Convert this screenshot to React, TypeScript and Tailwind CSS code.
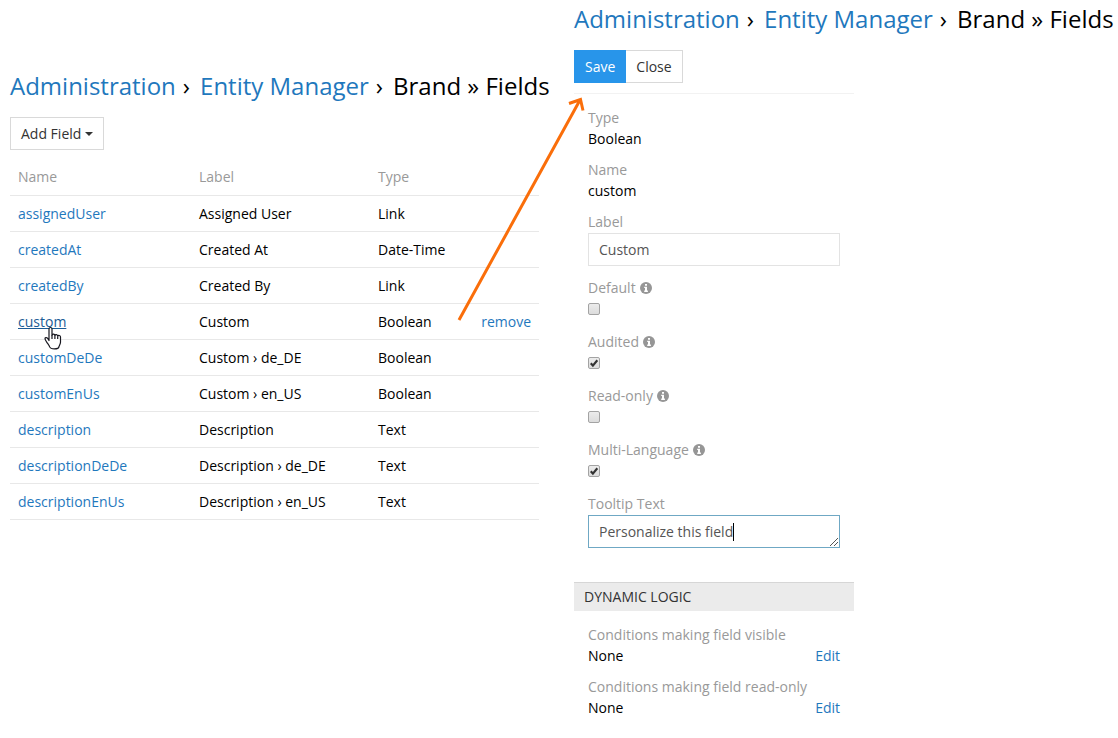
import { useState } from "react";

const fields = [
  { name: "assignedUser", label: "Assigned User", type: "Link" },
  { name: "createdAt", label: "Created At", type: "Date-Time" },
  { name: "createdBy", label: "Created By", type: "Link" },
  { name: "custom", label: "Custom", type: "Boolean", hovered: true },
  { name: "customDeDe", label: "Custom › de_DE", type: "Boolean" },
  { name: "customEnUs", label: "Custom › en_US", type: "Boolean" },
  { name: "description", label: "Description", type: "Text" },
  { name: "descriptionDeDe", label: "Description › de_DE", type: "Text" },
  { name: "descriptionEnUs", label: "Description › en_US", type: "Text" },
];

function Breadcrumb() {
  return (
    <h1 className="flex h-8 items-center whitespace-nowrap text-2xl leading-8 text-black">
      <a href="#admin" className="text-[#1f78bd]">Administration</a>
      <span className="mr-2.5 ml-[7px]">›</span>
      <a href="#entity-manager" className="text-[#1f78bd]">Entity Manager</a>
      <span className="mr-2.5 ml-[7px]">›</span>
      <span>Brand » Fields</span>
    </h1>
  );
}

function HandCursor() {
  return (
    <svg aria-hidden="true" viewBox="0 0 18 24" className="pointer-events-none absolute top-3.5 left-[26px] h-6 w-[18px]">
      <path
        d="M5 14.5V3c0-2 3-2 3 0v6.2c.2-1.6 2.8-1.4 2.9.3.4-1.3 2.7-1 2.8.6.6-1.1 2.8-.8 2.8 1v5.2c0 1.8-1.3 3-1.6 4.700-.3 1.300-1.700 1.900-4.400 1.900-2.900 0-4.300-.7-4.800-2-.6-2-1.900-3.100-3-4.800-.7-1.100-1.600-2.400-1.700-3.300-.1-1.300 1.600-1.500 2.500-.6z"
        fill="#fff"
        stroke="#17171f"
        strokeWidth="1.2"
        strokeLinejoin="round"
      />
      <path d="M8 9v4M10.900 9.500V13M13.700 10.500V13" fill="none" stroke="#17171f" strokeWidth="1.2" />
    </svg>
  );
}

function InfoIcon() {
  return (
    <svg aria-hidden="true" viewBox="0 0 12 12" className="h-3 w-3">
      <circle cx="6" cy="6" r="6" fill="#969696" />
      <path d="M5 2h2v1.700H5zM4.200 4.700H7v3.900h.9V10H4.200V8.600H5V6h-.8z" fill="#fff" />
    </svg>
  );
}

function StaticField({ label, value, edit }: { label: string; value: string; edit?: boolean }) {
  return (
    <div className="mb-2.5">
      <div className="text-[#999]">{label}</div>
      <div className="flex justify-between text-black">
        <span>{value}</span>
        {edit && <a href="#edit" className="text-[#1f78bd]">Edit</a>}
      </div>
    </div>
  );
}

function CheckField({ id, label, initial }: { id: string; label: string; initial: boolean }) {
  const [checked, setChecked] = useState(initial);
  return (
    <div className="mb-3">
      <label htmlFor={id} className="flex items-center gap-1 text-[#999]">
        {label}
        <InfoIcon />
      </label>
      <div className="grid h-[21px] w-3 items-center">
        <input
          id={id}
          type="checkbox"
          checked={checked}
          onChange={(e) => setChecked(e.target.checked)}
          className="col-start-1 row-start-1 h-3 w-3 appearance-none rounded-xs border border-[#a3a3a3] bg-linear-to-b from-[#ececec] to-[#dcdcdc]"
        />
        {checked && (
          <svg aria-hidden="true" viewBox="0 0 12 12" className="pointer-events-none z-10 col-start-1 row-start-1 h-3 w-3">
            <path d="M2.800 6.200L4.900 8.600L9.300 3.300" fill="none" stroke="#333" strokeWidth="2.200" />
          </svg>
        )}
      </div>
    </div>
  );
}

function FieldList() {
  return (
    <section className="min-w-0 pt-[70px] pr-[35px]">
      <Breadcrumb />
      <button type="button" className="mt-[15px] flex h-[33px] items-center gap-1 border border-[#d9d9d9] bg-white px-2.5 text-[#333]">
        Add Field
        <svg aria-hidden="true" viewBox="0 0 8 4" className="h-1 w-2">
          <path d="M0 0h8L4 4z" fill="#333" />
        </svg>
      </button>
      <table className="mt-[9px] w-full table-fixed text-left">
        <colgroup>
          <col className="w-[181px]" />
          <col className="w-[179px]" />
          <col />
          <col className="w-[78px]" />
        </colgroup>
        <thead>
          <tr className="h-9 border-b border-[#e8e8e8] text-[#999]">
            <th className="px-2 font-normal">Name</th>
            <th className="px-2 font-normal">Label</th>
            <th className="px-2 font-normal">Type</th>
            <th aria-label="Actions" />
          </tr>
        </thead>
        <tbody>
          {fields.map((f) => (
            <tr key={f.name} className="h-9 border-b border-[#e8e8e8] text-black">
              <td className="px-2">
                <span className="relative">
                  <a href={"#" + f.name} className={f.hovered ? "text-[#1b5c96] underline" : "text-[#1f78bd]"}>
                    {f.name}
                  </a>
                  {f.hovered && <HandCursor />}
                </span>
              </td>
              <td className="px-2">{f.label}</td>
              <td className="px-2">{f.type}</td>
              <td className="px-2 text-right">
                {f.hovered && <a href="#remove" className="text-[#1f78bd]">remove</a>}
              </td>
            </tr>
          ))}
        </tbody>
      </table>
    </section>
  );
}

function FieldEditor() {
  return (
    <section className="min-w-0 pt-[3px]">
      <Breadcrumb />
      <div className="max-w-[280px]">
        <div className="mt-[15px] flex border-b border-[#f2f2f2] pb-2.5">
          <button type="button" className="h-[33px] border border-[#2895ea] bg-[#2895ea] px-2.5 text-white">Save</button>
          <button type="button" className="h-[33px] border border-l-0 border-[#d9d9d9] bg-white px-2.5 text-[#333]">Close</button>
        </div>
        <form className="px-3.5 pt-[13px]">
          <StaticField label="Type" value="Boolean" />
          <StaticField label="Name" value="custom" />
          <div className="mb-[11px]">
            <label htmlFor="label" className="block text-[#999]">Label</label>
            <input id="label" type="text" defaultValue="Custom" className="mt-px block h-[33px] w-full border border-[#e3e3e3] px-2.5 text-[#555] outline-none" />
          </div>
          <CheckField id="default" label="Default" initial={false} />
          <CheckField id="audited" label="Audited" initial={true} />
          <CheckField id="read-only" label="Read-only" initial={false} />
          <CheckField id="multi-language" label="Multi-Language" initial={true} />
          <label htmlFor="tooltip" className="block text-[#999]">Tooltip Text</label>
          <div className="relative mt-px">
            <textarea id="tooltip" rows={1} defaultValue="Personalize this field" className="block h-[33px] w-full resize-none overflow-hidden border border-[#6fa8c4] px-2.5 py-[5px] text-[#555] outline-none" />
            <span aria-hidden="true" className="absolute top-2 left-[145px] h-[18px] w-px bg-black" />
            <svg aria-hidden="true" viewBox="0 0 8 8" className="absolute right-0.5 bottom-0.5 h-2 w-2">
              <path d="M0 8L8 0M4 8L8 4" stroke="#555" strokeWidth="1" />
            </svg>
          </div>
        </form>
        <h2 className="mt-[34px] h-[29px] border-t border-[#d6d6d6] bg-[#ebebeb] px-2.5 leading-7 text-[#333]">DYNAMIC LOGIC</h2>
        <div className="px-3.5 pt-[13px]">
          <StaticField label="Conditions making field visible" value="None" edit />
          <StaticField label="Conditions making field read-only" value="None" edit />
        </div>
      </div>
    </section>
  );
}

export default function App() {
  return (
    <main className="relative grid min-h-screen grid-cols-[141fr_136fr] overflow-x-hidden bg-white pl-2.5 font-['Open_Sans',sans-serif] text-sm leading-[21px]">
      <FieldList />
      <FieldEditor />
      <svg aria-hidden="true" viewBox="0 0 130 230" className="pointer-events-none absolute top-[94px] left-[456px] h-[230px] w-[130px]">
        <path d="M3 226L124 6M113 9.500L124.500 5.500L127 16.500" fill="none" stroke="#fa6e0a" strokeWidth="3" />
      </svg>
    </main>
  );
}
